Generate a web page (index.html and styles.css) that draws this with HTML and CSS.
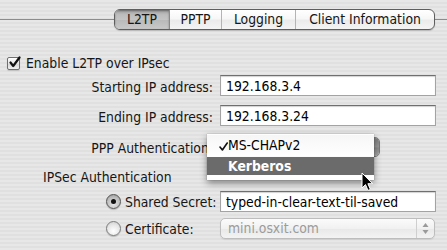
FILE: index.html
```html
<!DOCTYPE html>
<html>
<head>
<meta charset="utf-8">
<link rel="stylesheet" href="styles.css">
</head>
<body>
<div class="window">
  <div class="tabbar">
    <div class="tabs">
      <div class="tab t-l2tp selected">L2TP</div>
      <div class="tab t-pptp">PPTP</div>
      <div class="tab t-log">Logging</div>
      <div class="tab t-client">Client Information</div>
    </div>
  </div>

  <div class="check-row">
    <span class="checkbox"><svg width="13" height="13" viewBox="0 0 13 13"><path d="M2.5 6.5 L5.2 10 L11.5 1.5" fill="none" stroke="#111" stroke-width="2.2" stroke-linecap="round" stroke-linejoin="round"/></svg></span>
    <span>Enable L2TP over IPsec</span>
  </div>

  <div class="form">
    <div class="row r-start">
      <span class="label">Starting IP address:</span>
      <span class="field">192.168.3.4</span>
    </div>
    <div class="row r-end">
      <span class="label">Ending IP address:</span>
      <span class="field">192.168.3.24</span>
    </div>
    <div class="row r-ppp">
      <span class="label">PPP Authentication:</span>
      <div class="popup-wrap">
        <div class="popup"><span class="popup-cap"></span></div>
        <div class="menu">
          <div class="menu-item"><svg class="check" width="9" height="9" viewBox="0 0 9 9"><path d="M1 5 L3.4 8 L8.2 1" fill="none" stroke="#111" stroke-width="1.6" stroke-linecap="round" stroke-linejoin="round"/></svg>MS-CHAPv2</div>
          <div class="menu-item hi">Kerberos</div>
        </div>
        <svg class="cursor" width="13" height="20" viewBox="0 0 13 20"><path d="M1 1 L1 16 L4.5 12.6 L7 18.4 L9.4 17.4 L6.9 11.7 L11.6 11.7 Z" fill="#000" stroke="#fff" stroke-width="1" stroke-linejoin="round"/></svg>
      </div>
    </div>
    <div class="row r-ipsec">
      <span class="section">IPSec Authentication</span>
    </div>
    <div class="row r-secret">
      <span class="label radio-label"><span class="radio on"></span>Shared Secret:</span>
      <span class="field">typed-in-clear-text-til-saved</span>
    </div>
    <div class="row r-cert">
      <span class="label radio-label"><span class="radio"></span>Certificate:</span>
      <div class="select disabled">
        <span class="select-text">mini.osxit.com</span>
        <span class="stepper"><svg width="9" height="13" viewBox="0 0 9 13"><path d="M4.5 1 L7.5 5 L1.5 5 Z M4.5 12 L7.5 8 L1.5 8 Z" fill="#9a9a9a"/></svg></span>
      </div>
    </div>
  </div>
</div>
</body>
</html>
```

FILE: styles.css
```css
html, body {
  margin: 0;
  padding: 0;
}

body {
  width: 447px;
  height: 250px;
  overflow: hidden;
  font-family: "DejaVu Sans Condensed", "DejaVu Sans", sans-serif;
  font-stretch: semi-condensed;
  font-size: 13.8px;
  color: #161616;
  background: repeating-linear-gradient(to bottom, #e7e7e7 0, #e7e7e7 2px, #e0e0e0 2px, #e0e0e0 4px);
}

.window {
  display: flex;
  flex-direction: column;
}

/* Tabs */
.tabbar {
  display: flex;
  justify-content: flex-end;
  padding: 9px 12px 0 0;
  background: linear-gradient(#8c8c8c, #8c8c8c) 0 19px / 100% 1px no-repeat;
}

.tabs {
  display: flex;
  height: 19px;
  border: 1px solid #5e5e5e;
  border-radius: 6px;
  overflow: hidden;
  background: linear-gradient(#ffffff, #f7f7f7 45%, #ebebeb 55%, #f4f4f4);
  box-shadow: 0 1px 1px rgba(0, 0, 0, 0.18);
}

.tab {
  line-height: 19px;
  text-align: center;
  border-left: 1px solid #b4b4b4;
  white-space: nowrap;
}

.t-l2tp { width: 54px; border-left: 0; }
.t-pptp { width: 51px; }
.t-log { width: 73px; }
.t-client { width: 138px; }

.tab.selected {
  background: linear-gradient(#9e9e9e, #bdbdbd 25%, #c4c4c4 50%, #bababa 55%, #c9c9c9);
  box-shadow: inset 0 1px 2px rgba(0, 0, 0, 0.35);
}

.tab.selected + .tab {
  border-left-color: #8a8a8a;
}

/* Checkbox row */
.check-row {
  display: flex;
  align-items: center;
  gap: 6px;
  height: 16px;
  margin-top: 25px;
  padding-left: 7px;
}

.checkbox {
  width: 11px;
  height: 11px;
  border: 1px solid #6f6f6f;
  border-radius: 2px;
  background: linear-gradient(#ffffff, #e6e6e6 50%, #d8d8d8 55%, #f0f0f0);
  position: relative;
  box-shadow: 0 1px 1px rgba(0, 0, 0, 0.15);
}

.checkbox svg {
  position: absolute;
  left: 0;
  top: -2px;
}

/* Form rows */
.form {
  display: flex;
  flex-direction: column;
}

.row {
  display: flex;
  align-items: center;
  height: 21px;
}

.r-start { margin-top: 4px; }
.r-end { margin-top: 9px; }
.r-ppp { margin-top: 11px; height: 20px; }
.r-ipsec { margin-top: 12px; height: 16px; padding-left: 43px; }
.r-secret { margin-top: 6px; }
.r-cert { margin-top: 6px; }

.label {
  flex: none;
  width: 213px;
  margin-right: 7px;
  text-align: right;
  white-space: nowrap;
  padding-top: 2px;
}

.radio-label {
  display: flex;
  align-items: center;
  gap: 4px;
  padding-left: 106px;
  box-sizing: border-box;
  text-align: left;
  padding-top: 0;
}

.field {
  flex: none;
  width: 216px;
  height: 21px;
  box-sizing: border-box;
  padding: 1px 5px 0;
  line-height: 18px;
  color: #000;
  background: #fff;
  border: 1px solid #a3a3a3;
  border-top-color: #6f6f6f;
  box-shadow: inset 0 1px 1px rgba(0, 0, 0, 0.18);
  white-space: nowrap;
  overflow: hidden;
}

/* Popup behind menu */
.popup-wrap {
  position: relative;
  flex: none;
  width: 160px;
  height: 20px;
}

.popup {
  display: flex;
  justify-content: flex-end;
  height: 20px;
  box-sizing: border-box;
  border: 1px solid #7a7a7a;
  border-radius: 5px;
  background: linear-gradient(#fdfdfd, #eeeeee 50%, #e2e2e2 55%, #f3f3f3);
  overflow: hidden;
}

.popup-cap {
  width: 18px;
  background: linear-gradient(#7d7d7d, #9a9a9a 50%, #8a8a8a 55%, #a8a8a8);
}

/* Menu overlay */
.menu {
  position: absolute;
  left: -13px;
  top: -3px;
  width: 167px;
  padding: 1px 0 5px;
  background: rgba(255, 255, 255, 0.97);
  box-shadow: 0 3px 7px rgba(0, 0, 0, 0.45), 0 0 1px rgba(0, 0, 0, 0.35);
}

.menu-item {
  position: relative;
  height: 21px;
  line-height: 21px;
  padding-left: 21px;
  color: #000;
  background: linear-gradient(#f6f6f6, #ffffff);
}

.menu-item.hi {
  height: 18px;
  line-height: 18px;
  margin-top: 1px;
  background: #6b6b6b;
  color: #fff;
  font-weight: bold;
}

.check {
  position: absolute;
  left: 12px;
  top: 7px;
}

.cursor {
  position: absolute;
  left: 141px;
  top: 35px;
}

/* Section label */
.section {
  white-space: nowrap;
}

/* Radios */
.radio {
  flex: none;
  width: 13px;
  height: 13px;
  border: 1px solid #7c7c7c;
  border-radius: 50%;
  background: radial-gradient(circle at 50% 70%, #ffffff, #e7e7e7 55%, #c8c8c8);
  box-shadow: 0 1px 1px rgba(0, 0, 0, 0.2);
  position: relative;
}

.radio.on {
  background: radial-gradient(circle at 50% 70%, #e6e6e6, #bcbcbc 60%, #8f8f8f);
  border-color: #555;
}

.radio.on::after {
  content: "";
  position: absolute;
  left: 4px;
  top: 4px;
  width: 5px;
  height: 5px;
  border-radius: 50%;
  background: #111;
}

/* Disabled select */
.select {
  flex: none;
  display: flex;
  width: 215px;
  height: 21px;
  box-sizing: border-box;
  border: 1px solid #bdbdbd;
  border-radius: 5px;
  background: linear-gradient(#fbfbfb, #f1f1f1 50%, #e9e9e9 55%, #f3f3f3);
  box-shadow: 0 1px 1px rgba(0, 0, 0, 0.08);
}

.select-text {
  flex: 1;
  padding-left: 7px;
  line-height: 19px;
  color: #9b9b9b;
}

.stepper {
  width: 17px;
  border-left: 1px solid #cfcfcf;
  display: flex;
  align-items: center;
  justify-content: center;
}
```
